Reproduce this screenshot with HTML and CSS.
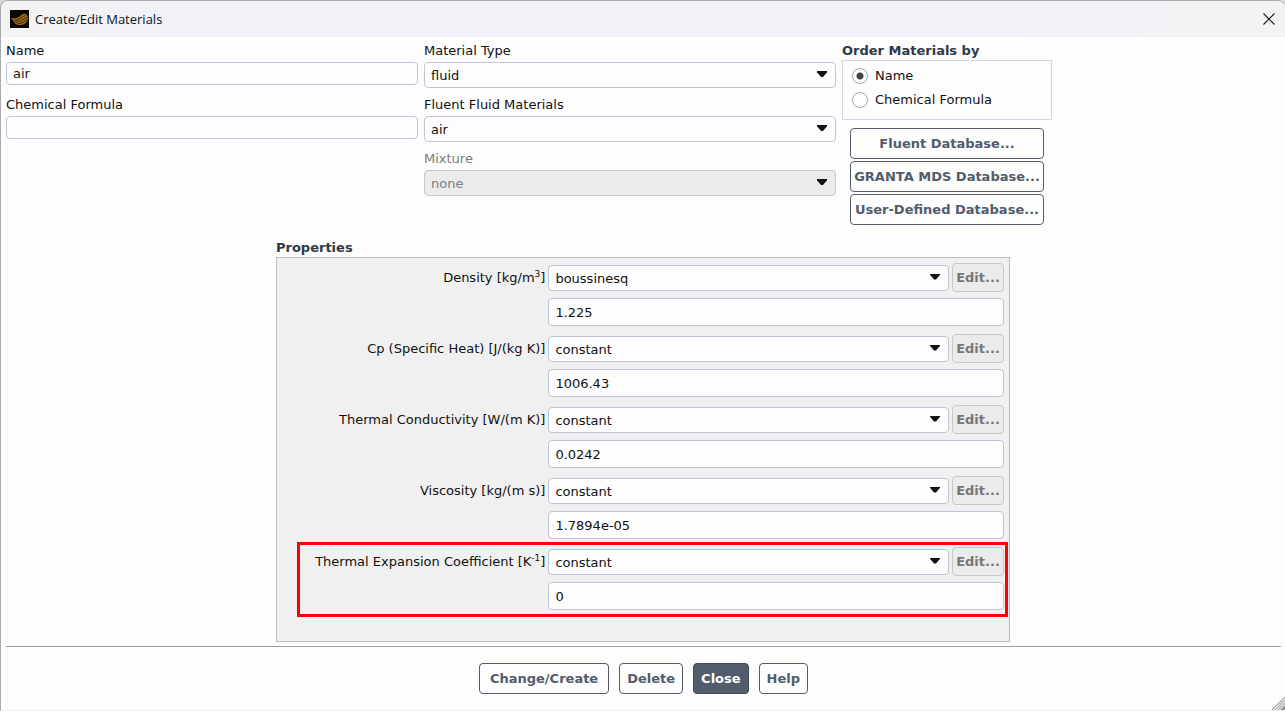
FILE: index.html
```html
<!DOCTYPE html>
<html lang="en">
<head>
<meta charset="utf-8">
<title>Create/Edit Materials</title>
<link rel="stylesheet" href="styles.css">
</head>
<body>
<div class="window">
  <header class="titlebar">
    <svg class="logo" viewBox="0 0 19 18" aria-hidden="true">
      <rect width="19" height="18" fill="#060606"/>
      <path d="M.5 8 C3 7.500 5 9 8 7.500 C10 6.500 12 3.500 14.500 3.500 C16.500 4 18 6 18 8.500 C18 12.500 14 15 10 15 C6 15 4.500 13.500 4 11.500 C3.500 10 2 9.500 .5 8 Z" fill="#9a6c14"/>
      <path d="M5 10 C9 10.500 11 7 15 5.500 M5 12 C10 12.500 13 9 17 7.500 M7 14 C12 13.500 15 11.500 18 9.500" fill="none" stroke="#1c1302" stroke-width=".8"/>
    </svg>
    <h1 class="title">Create/Edit Materials</h1>
    <button class="close-x" type="button" aria-label="Close window">
      <svg viewBox="0 0 12 12" aria-hidden="true"><path d="M.5 .5 L11.500 11.500 M11.500 .5 L.5 11.500" fill="none" stroke="#222" stroke-width="1.200"/></svg>
    </button>
  </header>

  <main class="content">
    <section class="top">
      <div class="column">
        <div class="field">
          <label for="name">Name</label>
          <input class="text" id="name" type="text" value="air">
        </div>
        <div class="field">
          <label for="formula">Chemical Formula</label>
          <input class="text" id="formula" type="text">
        </div>
      </div>
      <div class="column">
        <div class="field">
          <label for="type">Material Type</label>
          <span class="select"><select id="type"><option>fluid</option></select></span>
        </div>
        <div class="field">
          <label for="fluid">Fluent Fluid Materials</label>
          <span class="select"><select id="fluid"><option>air</option></select></span>
        </div>
        <div class="field">
          <label class="dim" for="mixture">Mixture</label>
          <span class="select"><select id="mixture" disabled><option>none</option></select></span>
        </div>
      </div>
      <div class="column">
        <h2 class="heading" id="order">Order Materials by</h2>
        <div class="radios" role="radiogroup" aria-labelledby="order">
          <label class="radio"><input type="radio" name="order" checked>Name</label>
          <label class="radio"><input type="radio" name="order">Chemical Formula</label>
        </div>
        <div class="databases">
          <button class="button" type="button">Fluent Database...</button>
          <button class="button" type="button">GRANTA MDS Database...</button>
          <button class="button" type="button">User-Defined Database...</button>
        </div>
      </div>
    </section>

    <section class="properties">
      <h2 class="heading">Properties</h2>
      <div class="panel">
        <div class="property">
          <label for="density">Density [kg/m<sup>3</sup>]</label>
          <span class="select"><select id="density"><option>boussinesq</option></select></span>
          <button class="button edit" type="button" disabled>Edit...</button>
          <input class="text value" type="text" value="1.225" aria-label="Density value">
        </div>
        <div class="property">
          <label for="cp">Cp (Specific Heat) [J/(kg K)]</label>
          <span class="select"><select id="cp"><option>constant</option></select></span>
          <button class="button edit" type="button" disabled>Edit...</button>
          <input class="text value" type="text" value="1006.43" aria-label="Specific heat value">
        </div>
        <div class="property">
          <label for="conductivity">Thermal Conductivity [W/(m K)]</label>
          <span class="select"><select id="conductivity"><option>constant</option></select></span>
          <button class="button edit" type="button" disabled>Edit...</button>
          <input class="text value" type="text" value="0.0242" aria-label="Thermal conductivity value">
        </div>
        <div class="property">
          <label for="viscosity">Viscosity [kg/(m s)]</label>
          <span class="select"><select id="viscosity"><option>constant</option></select></span>
          <button class="button edit" type="button" disabled>Edit...</button>
          <input class="text value" type="text" value="1.7894e-05" aria-label="Viscosity value">
        </div>
        <div class="property marked">
          <label for="expansion">Thermal Expansion Coefficient [K<sup>-1</sup>]</label>
          <span class="select"><select id="expansion"><option>constant</option></select></span>
          <button class="button edit" type="button" disabled>Edit...</button>
          <input class="text value" type="text" value="0" aria-label="Thermal expansion coefficient value">
        </div>
      </div>
    </section>
  </main>

  <footer class="actions">
    <button class="button wide" type="button">Change/Create</button>
    <button class="button" type="button">Delete</button>
    <button class="button primary" type="button">Close</button>
    <button class="button" type="button">Help</button>
  </footer>
  <svg class="grip" viewBox="0 0 14 14" aria-hidden="true">
    <path d="M14 9 V14 H9 Z" fill="#8c929a"/>
    <path d="M1 14 L14 1 M4 14 L14 4 M7 14 L14 7" stroke="#a8a8a8" stroke-width="1.200"/>
  </svg>
</div>
</body>
</html>
```
FILE: styles.css
```css
* { box-sizing: border-box; }

body {
  margin: 0;
  background: #d5d8dd;
  font: 13px/18px "DejaVu Sans", Verdana, sans-serif;
  color: #111;
}

input, select, button { font: inherit; color: inherit; margin: 0; }

.window {
  position: relative;
  display: flex;
  flex-direction: column;
  min-height: 100vh;
  background: #fdfdfd;
  border: 1px solid #a9abae;
  border-right: 0;
  border-bottom-color: #ececec;
  border-radius: 8px 8px 0 0;
  overflow: hidden;
}

.titlebar {
  display: flex;
  align-items: center;
  gap: 6px;
  height: 36px;
  padding: 0 10px 0 9px;
  background: linear-gradient(90deg, #f3f3f3, #f0f2f8 14%, #f0f2f8 75%, #f3f3f3);
}

.logo { width: 19px; height: 18px; }

.title { flex: 1; margin: 0; font: 13px/18px "Open Sans", sans-serif; }

.close-x { display: flex; padding: 0; border: 0; background: none; }
.close-x svg { width: 12px; height: 12px; }

.content { flex: 1; padding: 5px 5px 4px; }

.top {
  display: grid;
  grid-template-columns: 412fr 412fr 210fr 222fr;
  gap: 6px;
}

.field { display: flex; flex-direction: column; gap: 2px; height: 54px; }

.dim { color: #7c7c7c; }

.text {
  width: 100%;
  height: 23px;
  padding: 0 6px;
  border: 1px solid #bcc6d6;
  border-radius: 4px;
  background: #fdfdfd;
}

.select { position: relative; display: block; }

.select::after {
  content: "";
  position: absolute;
  top: 9px;
  right: 9px;
  width: 10px;
  height: 6px;
  background: #111;
  clip-path: polygon(0 0, 100% 0, 100% 20%, 60% 100%, 40% 100%, 0 20%);
  pointer-events: none;
}

select {
  display: block;
  width: 100%;
  height: 26px;
  padding: 2px 6px 0;
  border: 1px solid #bcc6d6;
  border-radius: 4px;
  background: #fdfdfd;
  appearance: none;
}

select:disabled { background: #ebebeb; border-color: #c8c8c8; color: #7c7c7c; opacity: 1; }

.heading { margin: 0; font-size: 13px; line-height: 18px; font-weight: bold; color: #2f3a48; }

.radios {
  display: flex;
  flex-direction: column;
  gap: 6px;
  height: 60px;
  padding: 6px 9px;
  border: 1px solid #d0d6e4;
}

.radio { display: flex; align-items: center; gap: 7px; }

.radio input {
  width: 16px;
  height: 16px;
  border: 1px solid #a8a8a8;
  border-radius: 50%;
  background: #fff;
  appearance: none;
}

.radio input:checked { background: radial-gradient(circle, #444 0 3px, #fff 4px); }

.databases { display: flex; flex-direction: column; gap: 2px; padding: 8px; }

.button {
  height: 31px;
  padding: 0 7px;
  border: 1px solid #525c6b;
  border-radius: 4px;
  background: #fdfdfd;
  color: #525c6b;
  font-weight: bold;
  white-space: nowrap;
}

.databases .button { padding: 1px 0 0; }

.properties { max-width: 734px; margin: 6px auto 0; }

.panel {
  display: flex;
  flex-direction: column;
  gap: 8px;
  padding: 5px 5px 31px;
  border: 1px solid #bdbdbd;
  background: #f0f0f0;
}

.property {
  position: relative;
  display: grid;
  grid-template-columns: 263fr 400fr 52px;
  grid-template-rows: 29px 28px;
  gap: 6px 3px;
  align-items: center;
}

.property label { text-align: right; }
.property sup { font-size: 9px; line-height: 9px; vertical-align: 5px; }

.edit { height: 29px; padding: 0; }
.edit:disabled { background: #ebebeb; border-color: #c8c8c8; color: #777; }

.value { grid-column: 2 / 4; height: 28px; }

.marked::after {
  content: "";
  position: absolute;
  inset: -5px -4px -7px 15px;
  border: 3px solid #f00;
  pointer-events: none;
}

.actions {
  display: flex;
  justify-content: center;
  gap: 10px;
  margin: 0 4px 0 5px;
  padding: 16px 0;
  border-top: 1px solid #a0a0a0;
}

.wide { padding: 0 10px; }

.primary { background: #525c6b; border-color: #434c5a; color: #fff; }

.grip { position: absolute; right: 0; bottom: 0; width: 14px; height: 14px; }
```
